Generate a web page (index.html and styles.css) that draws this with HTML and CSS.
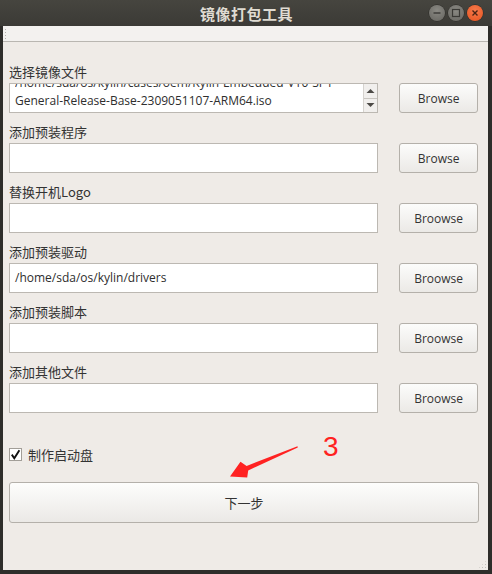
FILE: index.html
```html
<!DOCTYPE html>
<html lang="zh">
<head>
<meta charset="utf-8">
<title>镜像打包工具</title>
<link rel="stylesheet" href="styles.css">
</head>
<body>
<div class="window">
  <div class="titlebar">
    <span></span>
    <span class="title">镜像打包工具</span>
    <div class="wbtns">
      <span class="wbtn min"><svg width="16" height="16" viewBox="0 0 16 16"><line x1="4.5" y1="8" x2="11.5" y2="8" stroke="#3a3935" stroke-width="1.4"/></svg></span>
      <span class="wbtn max"><svg width="16" height="16" viewBox="0 0 16 16"><rect x="4.5" y="4.5" width="7" height="7" fill="none" stroke="#3a3935" stroke-width="1.2"/></svg></span>
      <span class="wbtn close"><svg width="16" height="16" viewBox="0 0 16 16"><path d="M5.5 5.5 L10.5 10.5 M10.5 5.5 L5.5 10.5" stroke="#4a2414" stroke-width="1.4"/></svg></span>
    </div>
  </div>
  <div class="client">
    <div class="toolbar"><span class="grip"></span></div>
    <div class="content">
      <div class="group">
        <div class="label">选择镜像文件</div>
        <div class="row">
          <div class="field multi">
            <div class="lines">
              <div class="line">/home/sda/os/kylin/cases/oem/Kylin-Embedded-V10-SP1-</div>
              <div class="line">General-Release-Base-2309051107-ARM64.iso</div>
            </div>
            <div class="sbar">
              <span class="sarrow"><svg width="9" height="6" viewBox="0 0 9 6"><path d="M0.5 5 L4.5 1 L8.5 5 Z" fill="#4c4a46"/></svg></span>
              <span class="sarrow"><svg width="9" height="6" viewBox="0 0 9 6"><path d="M0.5 1 L4.5 5 L8.5 1 Z" fill="#4c4a46"/></svg></span>
            </div>
          </div>
          <button class="btn">Browse</button>
        </div>
      </div>
      <div class="group">
        <div class="label">添加预装程序</div>
        <div class="row"><div class="field"></div><button class="btn">Browse</button></div>
      </div>
      <div class="group">
        <div class="label">替换开机Logo</div>
        <div class="row"><div class="field"></div><button class="btn">Broowse</button></div>
      </div>
      <div class="group">
        <div class="label">添加预装驱动</div>
        <div class="row"><div class="field">/home/sda/os/kylin/drivers</div><button class="btn">Broowse</button></div>
      </div>
      <div class="group">
        <div class="label">添加预装脚本</div>
        <div class="row"><div class="field"></div><button class="btn">Broowse</button></div>
      </div>
      <div class="group">
        <div class="label">添加其他文件</div>
        <div class="row"><div class="field"></div><button class="btn">Broowse</button></div>
      </div>
      <label class="check"><span class="box"><svg width="11" height="11" viewBox="0 0 11 11"><path d="M1.8 5.6 L4.3 9.2 L9.4 1.2" fill="none" stroke="#111" stroke-width="1.9"/></svg></span>制作启动盘</label>
      <button class="next">下一步</button>
    </div>
    <span class="sizegrip"></span>
  </div>
  <div class="annot">
    <svg width="492" height="574" viewBox="0 0 492 574">
      <polygon points="297.5,446.2 246.6,466.0 240.5,461.8 230,476.5 247.2,477.6 248.2,470.4 297.8,447.6" fill="#ff2222"/>
    </svg>
    <span class="num">3</span>
  </div>
</div>
</body>
</html>
```
FILE: styles.css
```css
html, body {
  margin: 0;
  padding: 0;
}
body {
  width: 492px;
  height: 574px;
  overflow: hidden;
  font-family: "Open Sans", "Noto Sans", "Noto Sans CJK SC", sans-serif;
  font-size: 12px;
  color: #333;
}
.window {
  position: relative;
  width: 492px;
  height: 574px;
  background: #2e2d2a;
  display: flex;
  flex-direction: column;
}
.titlebar {
  height: 26px;
  display: grid;
  grid-template-columns: 1fr auto 1fr;
  align-items: center;
  background: linear-gradient(#46453f, #3b3a36);
}
.title {
  color: #dfdbd2;
  font-family: "Noto Sans CJK SC", sans-serif;
  font-weight: bold;
  font-size: 15px;
  letter-spacing: 0.5px;
  padding-left: 1px;
}
.wbtns {
  justify-self: end;
  display: flex;
  gap: 3px;
  padding-right: 9px;
  margin-top: -1px;
}
.wbtn {
  width: 16px;
  height: 16px;
  border-radius: 50%;
  display: block;
}
.wbtn svg { display: block; }
.wbtn.min, .wbtn.max {
  background: radial-gradient(circle at 50% 35%, #8a8983, #65645f);
  box-shadow: 0 0 0 0.5px #2a2926;
}
.wbtn.close {
  background: radial-gradient(circle at 50% 35%, #f77a4c, #e5531f);
  box-shadow: 0 0 0 0.5px #2a2926;
}
.client {
  position: relative;
  flex: 1;
  margin: 0 4px 4px 3px;
  background: #efebe7;
  display: flex;
  flex-direction: column;
}
.toolbar {
  height: 15px;
  background: #f3f1ef;
  border-bottom: 1px solid #b9b6b1;
  display: flex;
  align-items: center;
  padding-left: 1px;
}
.grip {
  width: 3px;
  height: 12px;
  background-image: radial-gradient(circle, #b3b0ab 0.8px, transparent 1px);
  background-size: 3px 3px;
}
.content {
  display: flex;
  flex-direction: column;
  padding: 21px 10px 0 6px;
  gap: 10px;
}
.group {
  display: flex;
  flex-direction: column;
  gap: 2px;
}
.label {
  height: 18px;
  line-height: 18px;
  font-family: "Noto Sans CJK SC", sans-serif;
  font-size: 13px;
  color: #333;
}
.row {
  display: flex;
  align-items: center;
  gap: 21px;
}
.field {
  box-sizing: border-box;
  width: 370px;
  height: 30px;
  background: #fff;
  border: 1px solid #bcb8b2;
  padding: 0 5px;
  line-height: 28px;
  font-size: 12px;
  color: #2e2e2e;
  white-space: nowrap;
  overflow: hidden;
}
.field.multi {
  display: flex;
  padding: 0 0 0 5px;
}
.lines {
  flex: 1;
  display: flex;
  flex-direction: column;
  justify-content: flex-end;
  overflow: hidden;
  padding-bottom: 2px;
}
.line {
  flex-shrink: 0;
  line-height: 18px;
  height: 18px;
}
.sbar {
  width: 13px;
  display: flex;
  flex-direction: column;
  border-left: 1px solid #d6d3cf;
  background: #f1efed;
}
.sarrow {
  flex: 1;
  display: flex;
  align-items: center;
  justify-content: center;
}
.sarrow + .sarrow {
  border-top: 1px solid #c8c5c0;
}
.sarrow svg { display: block; }
.btn {
  box-sizing: border-box;
  width: 79px;
  height: 30px;
  margin: 0;
  border: 1px solid #b4b0aa;
  border-radius: 3px;
  background: linear-gradient(#fcfcfb, #ebe9e6);
  font-family: "Open Sans", "Noto Sans", sans-serif;
  font-size: 12px;
  color: #333;
  padding: 0;
}
.check {
  display: flex;
  align-items: center;
  gap: 6px;
  margin-top: 22px;
  height: 18px;
  font-family: "Noto Sans CJK SC", sans-serif;
  font-size: 13px;
  color: #333;
}
.box {
  box-sizing: border-box;
  width: 13px;
  height: 13px;
  background: #fff;
  border: 1px solid #a29e98;
  display: flex;
  align-items: center;
  justify-content: center;
}
.box svg { display: block; }
.next {
  box-sizing: border-box;
  width: 470px;
  height: 41px;
  margin: 9px 0 0 0;
  border: 1px solid #b4b0aa;
  border-radius: 3px;
  background: linear-gradient(#fdfdfc, #ebe9e6);
  font-family: "Noto Sans CJK SC", sans-serif;
  font-size: 13px;
  color: #333;
}
.sizegrip {
  position: absolute;
  right: 1px;
  bottom: 1px;
  width: 9px;
  height: 9px;
  background-image: radial-gradient(circle, #c2bfba 0.8px, transparent 1px);
  background-size: 3px 3px;
  clip-path: polygon(100% 0, 100% 100%, 0 100%);
}
.annot {
  position: absolute;
  left: 0;
  top: 0;
  width: 492px;
  height: 574px;
  pointer-events: none;
}
.annot svg {
  position: absolute;
  left: 0;
  top: 0;
}
.num {
  position: absolute;
  left: 323px;
  top: 429px;
  font-family: "Liberation Sans", sans-serif;
  font-size: 28px;
  line-height: 36px;
  color: #ff2222;
}
```
